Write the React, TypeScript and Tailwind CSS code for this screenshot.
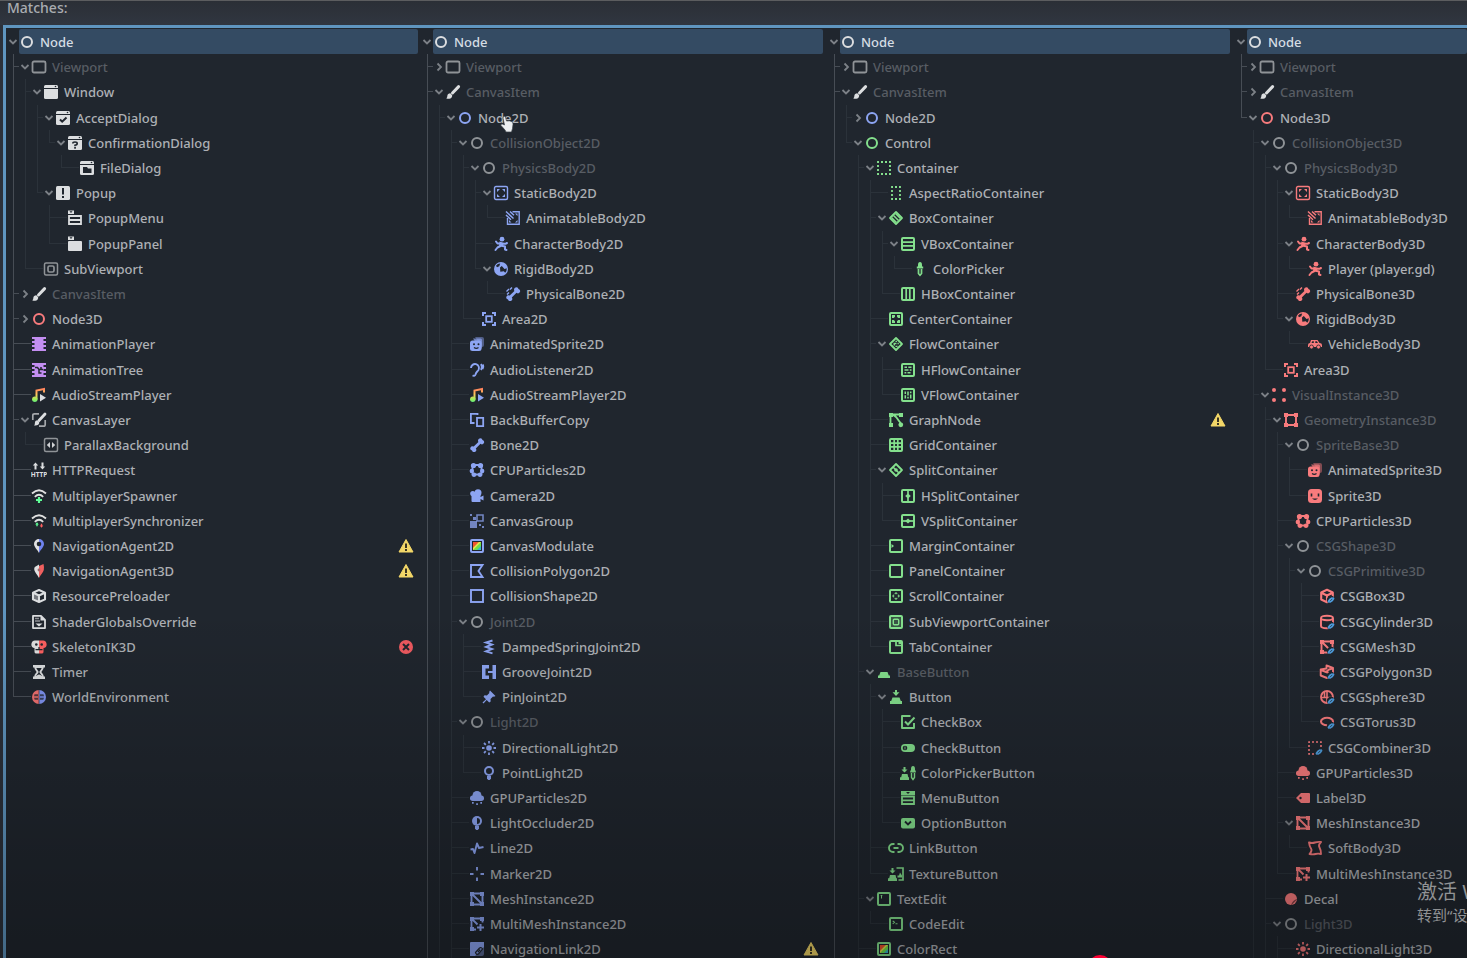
import { useState } from "react";
import type { ReactNode } from "react";

const INK = "#20262e";

const windowShape = (
  <>
    <path fill="currentColor" d="M1 4V2.5Q1 1 2.5 1h11Q15 1 15 2.5V4z" />
    <path fill="currentColor" d="M1 5h14v8.5q0 1.5-1.5 1.5h-11Q1 15 1 13.5z" />
    <circle cx="12.5" cy="2.5" r=".8" fill={INK} />
  </>
);

const brush = (
  <>
    <path stroke="currentColor" strokeWidth="3" strokeLinecap="round" d="M13.600 2.600 7.500 9" />
    <path fill="currentColor" d="M5.300 9.300l1.900 1.900c.2 2-1.200 3.300-3 3.500-1.100.1-2.200-.1-3-.5 1.100-.6 1-1.400 1.100-2.300.2-1.500 1.400-2.600 3-2.600z" />
  </>
);

const film = (
  <path
    fill="currentColor"
    fillRule="evenodd"
    d="M1 1h14v14H1zM1 3v2h2.500V3zM1 7v2h2.500V7zM1 11v2h2.500v-2zM12.500 3v2H15V3zM12.500 7v2H15V7zM12.500 11v2H15v-2z"
  />
);

const note = (
  <>
    <defs>
      <linearGradient id="noteFill" x1="0" y1="1" x2="0" y2="15" gradientUnits="userSpaceOnUse">
        <stop offset="0" stopColor="#ff7a5c" />
        <stop offset=".45" stopColor="#ffc65c" />
        <stop offset=".8" stopColor="#a0ee5c" />
        <stop offset="1" stopColor="#5fe87a" />
      </linearGradient>
    </defs>
    <path d="M5.500 12.500V3.500l7.500-1.500v3.500" fill="none" stroke="url(#noteFill)" strokeWidth="2" />
    <circle cx="3.800" cy="12.300" r="2.700" fill="url(#noteFill)" />
    <path d="M9 7l6 3.800-6 3.800z" fill="currentColor" />
  </>
);

const wifi = (
  <g fill="none" stroke="#e0e0e0" strokeWidth="1.800">
    <path d="M1 5.500q7-6.500 14 0" />
    <path d="M3.800 8.800q4.200-4 8.400 0" />
  </g>
);

const bone = (
  <path
    fill="currentColor"
    d="M10.500 1.500a2.200 2.200 0 0 1 3 1.500 2.200 2.200 0 0 1 1.300 3.300 2.300 2.300 0 0 1-3.300.5L6.800 11.500a2.300 2.300 0 0 1-.5 3.200 2.200 2.200 0 0 1-3.300-1.300 2.200 2.200 0 0 1-1.500-3 2.300 2.300 0 0 1 3.200-.8l4.700-4.700a2.300 2.300 0 0 1 1.100-3.400z"
  />
);

const face = (
  <>
    <circle cx="5" cy="8.300" r="1" fill={INK} />
    <circle cx="9.500" cy="8.300" r="1" fill={INK} />
    <path d="M5 11.500q2.300 1.800 4.500 0" fill="none" stroke={INK} strokeWidth="1.200" />
  </>
);

const frame = <rect x="2" y="2" width="12" height="12" rx="1" fill="none" stroke="currentColor" strokeWidth="2" />;
const diamond = <path d="M8 2l6 6-6 6-6-6z" fill="none" stroke="currentColor" strokeWidth="1.800" strokeLinejoin="round" />;
const bodyCorners = (
  <path fill="currentColor" d="M4 4h3L4 7zM12 4v3L9 4zM4 12V9l3 3zM12 12H9l3-3z" />
);
const cornerDots = (
  <path fill="currentColor" d="M1 1h4v4H1zM11 1h4v4h-4zM1 11h4v4H1z" />
);
const lastDot = <path fill="currentColor" d="M11 11h4v4h-4z" />;
const link = (
  <g>
    <circle cx="12" cy="12" r="4.200" fill={INK} />
    <path d="M9.800 13.500l1.300-1.900 1.700-1M14.200 10.500l-1.300 1.900-1.700 1" fill="none" stroke="#4f9fe0" strokeWidth="2.400" strokeLinecap="round" />
    <path d="M11 13.200l2.200-2.300" stroke={INK} strokeWidth=".7" />
  </g>
);
const pressed = <path fill="currentColor" d="M7 1h2v2.300h2.500L8 7 4.500 3.300H7zM4.500 8.500h7l1.300 3.500H14v3H2v-3h1.200z" />;
const smallPressed = <path fill="currentColor" d="M3.500 2h2v2.500h2l-3 3-3-3h2zM2 9h5.500l.8 3.300H9V15H0v-2.700h1.200z" />;
const rainbow = (
  <>
    <rect x="4" y="4" width="8" height="8" fill="#6fe04a" />
    <path d="M4 4h6L4 10z" fill="#f0552f" />
    <path d="M10 4h2L4 12v-2z" fill="#f3e04a" />
    <path d="M12 8v4H8z" fill="#35b7c9" />
  </>
);
const sun = (
  <>
    <circle cx="8" cy="8" r="2.800" fill="currentColor" />
    <path
      d="M8 1v2.500M8 12.500V15M1 8h2.500M12.500 8H15M3 3l1.800 1.800M11.200 11.200L13 13M13 3l-1.800 1.800M4.800 11.200L3 13"
      stroke="currentColor"
      strokeWidth="1.800"
    />
  </>
);
const bulbBase = <path fill="currentColor" d="M6 11h4v2.500L8.800 15H7.200L6 13.500z" />;

const ICONS: Record<string, ReactNode> = {
  ring: <circle cx="8" cy="8" r="5" fill="none" stroke="currentColor" strokeWidth="2" />,
  viewport: <rect x="1.500" y="2.500" width="13" height="11" rx="1.500" fill="none" stroke="currentColor" strokeWidth="1.800" />,
  brush,
  window: windowShape,
  accept: (
    <>
      {windowShape}
      <path d="M5 9.500l2.200 2.200L11.500 7.500" fill="none" stroke={INK} strokeWidth="2" />
    </>
  ),
  confirm: (
    <>
      {windowShape}
      <path d="M5.800 8.500q0-1.500 2.200-1.500t2.200 1.500q0 1.500-2.200 1.700v1" fill="none" stroke={INK} strokeWidth="1.600" />
      <rect x="7.200" y="12" width="1.700" height="1.700" fill={INK} />
    </>
  ),
  file: (
    <>
      {windowShape}
      <path d="M4 7h4l1 1.500h3.500V13H4z" fill={INK} />
    </>
  ),
  popup: (
    <>
      <rect x="1" y="1" width="14" height="14" rx="1.500" fill="currentColor" />
      <path d="M7 3h2v6.500H7zM7 11h2v2H7z" fill={INK} />
    </>
  ),
  popupMenu: (
    <>
      <path d="M1 .5h6V4H1z" fill="currentColor" />
      <path d="M2.500 1.300h3L4 3z" fill={INK} />
      <path d="M2 6h12v8H2zM2 10h12" fill="none" stroke="currentColor" strokeWidth="1.800" />
    </>
  ),
  popupPanel: (
    <>
      <path d="M1 .5h6V4H1z" fill="currentColor" />
      <path d="M2.500 1.300h3L4 3z" fill={INK} />
      <rect x="1" y="5" width="14" height="10" rx="1" fill="currentColor" />
    </>
  ),
  subViewport: (
    <>
      <rect x="1.500" y="2" width="13" height="12" rx="1.500" fill="none" stroke="currentColor" strokeWidth="1.500" />
      <rect x="5" y="5" width="6" height="6" rx="1.500" fill="none" stroke="currentColor" strokeWidth="1.700" />
    </>
  ),
  film,
  filmTree: (
    <>
      {film}
      <path d="M4 5.500h2.500l1.500 2h4M8 7.500v3.500h2.500M10 5v2" fill="none" stroke={INK} strokeWidth="1.500" />
    </>
  ),
  note,
  canvasLayer: (
    <>
      <path d="M8 1.800H3.500Q1.800 1.800 1.800 3.500V8M14.200 8v4.500q0 1.700-1.700 1.700H8" fill="none" stroke="#a4a7ab" strokeWidth="1.700" />
      <path d="M14 2L8 8.500" stroke="currentColor" strokeWidth="2.800" strokeLinecap="round" />
      <path d="M6.300 8.300l2 2c0 2.500-2.300 3.700-5.300 3.200 1.300-1 .6-2 1-3.300.3-1.200 1.200-1.900 2.300-1.900z" fill="currentColor" />
    </>
  ),
  parallax: (
    <>
      <rect x="1.500" y="1.500" width="13" height="13" rx="1.500" fill="none" stroke="currentColor" strokeWidth="1.500" />
      <path d="M7 5v6L3.800 8zM9 5v6l3.200-3z" fill="#d0d2d5" />
    </>
  ),
  http: (
    <>
      <path d="M3.500 7.500v-4H1.800L4.500.5l2.700 3H5.500v4zM10.500.5v4H8.800l2.700 3 2.700-3h-1.700v-4z" fill="currentColor" />
      <text x="8" y="15" textAnchor="middle" fontSize="6.500" fontWeight="700" fill="currentColor" fontFamily="Noto Sans, sans-serif">
        HTTP
      </text>
    </>
  ),
  spawner: (
    <>
      {wifi}
      <path d="M8 9v6M5 12h6" stroke="#5fff97" strokeWidth="2.200" />
    </>
  ),
  synchronizer: (
    <>
      {wifi}
      <path d="M4.200 11.500L6 9.200l1.800 2.300H6.700v1.800H5.300v-1.800z" fill="#5fff97" />
      <path d="M8.700 12.500l1.800 2.300 1.800-2.300h-1.100v-1.800H9.800v1.800z" fill="#ff5f5f" />
    </>
  ),
  agent2d: (
    <>
      <path d="M8 1a5 5 0 0 0-5 5c0 3 3 5 5 9z" fill="#e0e0e0" />
      <path d="M8 1a5 5 0 0 1 5 5c0 3-3 5-5 9z" fill="#6f83f0" />
      <circle cx="8" cy="6" r="2.300" fill={INK} />
    </>
  ),
  agent3d: (
    <>
      <path d="M8 1.500L3.800 4Q3 5 3.300 7c.5 2.500 3.200 4.500 4.700 8z" fill="#e0e0e0" />
      <path d="M8 3l4.500-2q.8 3 .3 6c-.5 2.500-3.300 4.500-4.800 8z" fill="#f0605f" />
      <circle cx="8" cy="7" r="1.400" fill="#a5686c" />
    </>
  ),
  box: (
    <>
      <path d="M8 2l6 2.600v6.800L8 14l-6-2.600V4.600zM2.200 4.800L8 7.500l5.800-2.700M8 7.500V14" fill="none" stroke="currentColor" strokeWidth="2.100" strokeLinejoin="round" />
      <path d="M2 5l6 2.800V14l-6-2.700z" fill="currentColor" fillOpacity=".45" />
    </>
  ),
  shaderGlobals: (
    <>
      <path d="M2 1.900h8l4 4v8.200H2z" fill="none" stroke="currentColor" strokeWidth="1.800" strokeLinejoin="round" />
      <path d="M4 4.500h4M4 7h5" stroke="#8e9196" strokeWidth="1.600" />
      <path d="M9.500 1.500v5h5M4.500 9.500h7l-3.500 3z" fill="currentColor" />
    </>
  ),
  skull: (
    <>
      <path d="M8 1.500H5A3.800 3.800 0 0 0 3.500 9v4.300Q4 14.500 5 14.500h3z" fill="#e0e0e0" />
      <path d="M8 1.500h3A3.800 3.800 0 0 1 12.500 9v4.300q-.5 1.200-1.500 1.200H8z" fill="#fc6060" />
      <circle cx="5.300" cy="5.500" r="1.300" fill={INK} />
      <circle cx="10.700" cy="5.500" r="1.300" fill={INK} />
      <path d="M4.500 10.700h7M8 8v2" stroke={INK} strokeWidth="1.200" />
    </>
  ),
  timer: (
    <>
      <path d="M2 1h12v2.500H2zM2 12.500h12V15H2z" fill="currentColor" />
      <path d="M4.200 3c0 3 2.500 4 2.500 5s-2.500 2-2.500 5h7.600c0-3-2.500-4-2.500-5s2.500-2 2.500-5z" fill="none" stroke="currentColor" strokeWidth="1.900" />
      <path d="M5 12.500Q8 8.500 11 12.500z" fill="currentColor" />
    </>
  ),
  world: (
    <>
      <path d="M8 1a7 7 0 0 0 0 14z" fill="#f07070" />
      <path d="M8 1a7 7 0 0 1 0 14z" fill="#7e92f0" />
      <path d="M3.500 5.300h3.500v2H3zM3 8.700h4v2H3.700zM9 5.300h3.500l.5 2H9zM9 8.700h4l-.7 2H9z" fill={INK} fillOpacity=".75" />
      <path d="M8 1v14" stroke={INK} strokeWidth=".6" />
    </>
  ),
  staticBody: (
    <>
      <rect x="1.500" y="1.500" width="13" height="13" rx="1.500" fill="none" stroke="currentColor" strokeWidth="1.400" />
      {bodyCorners}
    </>
  ),
  animBody: (
    <>
      <path d="M7.500 1.800h6.700v12.400H2.500V8" fill="none" stroke="currentColor" strokeWidth="1.400" />
      <path d="M1 1.500l7.500 7M1 5l5 4.700M5 1.500l4 3.700" stroke="currentColor" strokeWidth="1.500" />
      <path fill="currentColor" d="M12.500 3.500v2.500L10 3.500zM4 12.500V10l2.500 2.500zM12.500 12.500H10l2.500-2.500z" />
    </>
  ),
  character: (
    <>
      <circle cx="9" cy="3.200" r="2.400" fill="currentColor" />
      <path d="M6.500 5.500L11 7l-1.500 3L6 11z" fill="currentColor" />
      <path d="M3 5.500l1.500 2H8M7.500 10L4.500 11.500 2.500 14M8.500 9.800l3.500.7v3l1.500.5M9.500 7.800h3L14 7" fill="none" stroke="currentColor" strokeWidth="2" strokeLinejoin="round" strokeLinecap="round" />
    </>
  ),
  rigid: (
    <>
      <circle cx="8" cy="8" r="7" fill="currentColor" />
      <path d="M3 4.800Q4.500 2.600 7.200 2.500L6.300 5.200 4 6.300z" fill={INK} />
      <path d="M7 6.500l1.800-1.500 2.700 3 2.300-.7q.2 2.500-1.600 4.500l-1.400-1.600-3.500.5z" fill={INK} />
    </>
  ),
  bone,
  physBone: (
    <>
      {bone}
      <path d="M1.500 5.500l2.500-2.500M2 8.500l2-2M5 3.500l2-2" stroke="currentColor" strokeWidth="1.400" />
    </>
  ),
  area: (
    <>
      <path d="M5 2H2v3M11 2h3v3M5 14H2v-3M11 14h3v-3" fill="none" stroke="currentColor" strokeWidth="2" />
      <rect x="5.200" y="5.200" width="5.600" height="5.600" fill="none" stroke="currentColor" strokeWidth="1.800" />
    </>
  ),
  animSprite: (
    <>
      <path d="M6 1h7q2 0 2 2v6q0 2-2 2z" fill="currentColor" fillOpacity=".45" />
      <path d="M4 2.500h7.500q1.500 0 1.500 1.500v7q0 2-2 2z" fill="currentColor" fillOpacity=".7" />
      <rect x="1" y="4.500" width="11.500" height="10.500" rx="2.500" fill="currentColor" />
      {face}
    </>
  ),
  sprite: (
    <>
      <rect x="1" y="1" width="14" height="14" rx="3.500" fill="currentColor" />
      <path d="M4.500 5.500v3M11.500 5.500v3" stroke={INK} strokeWidth="1.600" />
      <path d="M5 10.500q3 2.800 6 0z" fill={INK} />
    </>
  ),
  ear: (
    <path d="M2 6a4 4 0 1 1 7.500 2C8 10 7 10 6.500 12.500 6 14 4.500 14 3.500 13.500M12 2q1.800 3 0 6M14 2.500q.8 2.500-.5 4.500" fill="none" stroke="currentColor" strokeWidth="1.900" />
  ),
  backBuffer: (
    <path d="M5.500 11H1.900V1.900h6.600V3M8 5.900h6.200v8.200H8z" fill="none" stroke="currentColor" strokeWidth="1.800" />
  ),
  cpuParticles: (
    <>
      <path d="M3.500 3h9v9.500h-9z" fill="none" stroke="currentColor" strokeWidth="1.800" />
      <g fill="currentColor">
        <circle cx="4.500" cy="3.500" r="2.600" />
        <circle cx="11.500" cy="3.500" r="2.600" />
        <circle cx="5" cy="12.800" r="2.200" />
        <circle cx="11" cy="12.800" r="2.200" />
        <circle cx="2.800" cy="9" r="2.200" />
        <circle cx="13.200" cy="9" r="2.200" />
      </g>
    </>
  ),
  camera: (
    <>
      <circle cx="9" cy="4.800" r="3.500" fill="currentColor" />
      <circle cx="3.800" cy="5.500" r="2.600" fill="currentColor" />
      <path d="M2.500 7h9v2l3-1.500v5L11.500 11v3h-8q-1 0-1-1z" fill="currentColor" />
    </>
  ),
  canvasGroup: (
    <>
      <path d="M1 8h7v7H1z" fill="currentColor" fillOpacity=".75" />
      <path d="M8 2h6v6H8z" fill="none" stroke="currentColor" strokeWidth="1.600" strokeOpacity=".75" />
      <path d="M1 1h2v2H1zM13 13h2v2h-2zM4 4h3v3H4zM10 11h2v2h-2z" fill="currentColor" fillOpacity=".75" />
    </>
  ),
  modulate: (
    <>
      {frame}
      {rainbow}
    </>
  ),
  polygon: <path d="M2 2h11.500L9.500 8l4 6H2z" fill="none" stroke="currentColor" strokeWidth="1.900" />,
  square: <rect x="2" y="2" width="12" height="12" fill="none" stroke="currentColor" strokeWidth="1.900" />,
  spring: <path d="M11.500 1.500L5 3.500l6 2L5 8l6 2-6 2.300 6.500 2" fill="none" stroke="currentColor" strokeWidth="1.900" />,
  groove: (
    <>
      <path d="M1 1h7v3.500H4.500v7H8V15H1zM11.500 1H15v14h-3.500z" fill="currentColor" />
      <path d="M7 8h5" stroke="currentColor" strokeWidth="2" />
    </>
  ),
  pin: (
    <path d="M9 1.500l5.500 5.500-1.500.8-1-.2-2.500 2.500.2 2.400-1.500 1L5.700 11 2.500 14.500 1.500 13.500 5 10.300 2.500 7.800l1-1.500 2.400.2L8.400 4l-.2-1z" fill="currentColor" />
  ),
  sun,
  bulb: (
    <>
      <circle cx="8" cy="6" r="4" fill="none" stroke="currentColor" strokeWidth="2" />
      {bulbBase}
    </>
  ),
  occluder: (
    <>
      <circle cx="8" cy="6" r="5" fill="currentColor" />
      <path d="M8 3a3 3 0 0 1 0 6z" fill={INK} />
      {bulbBase}
    </>
  ),
  gpuParticles: (
    <>
      <circle cx="8" cy="5.500" r="4.500" fill="currentColor" />
      <rect x="1" y="5.500" width="14" height="5.500" rx="2.700" fill="currentColor" />
      <path d="M3 12h1.700v1.700H3zM7.200 13.300h1.700V15H7.200zM11.300 12H13v1.700h-1.700z" fill="currentColor" />
    </>
  ),
  line: <path d="M1.500 9.500L4 9l1.500 4L8 3.500 10 8l4.500-1" fill="none" stroke="currentColor" strokeWidth="1.900" strokeLinejoin="round" />,
  marker: <path d="M8 1v3.500M8 11.500V15M1 8h3.500M11.500 8H15" stroke="currentColor" strokeWidth="1.900" />,
  mesh: (
    <>
      <path d="M2.500 2.500h11v11h-11zL13.500 13.500" fill="none" stroke="currentColor" strokeWidth="1.900" />
      {cornerDots}
      {lastDot}
    </>
  ),
  multiMesh: (
    <>
      <path d="M2.500 13.500v-11h11M2.500 2.500l6 6M4 13.500h3M13.500 3.500v3" fill="none" stroke="currentColor" strokeWidth="1.800" />
      {cornerDots}
      <path d="M11.500 8v7M8 11.500h7" stroke="currentColor" strokeWidth="2" />
    </>
  ),
  navLink: (
    <>
      <path d="M1 2q0-1 1-1h13v5L6 15H1z" fill="currentColor" />
      <path d="M15 4v9q0 2-2 2H4z" fill="currentColor" fillOpacity=".5" />
      <path d="M6.500 11.500l4-4.500q2-1 3 1L9.500 13q-2.500 1-3-1.500z" fill="none" stroke={INK} strokeWidth="1.200" />
      <path d="M8.800 11.200l2.400-2.700" stroke={INK} strokeWidth="1.200" />
    </>
  ),
  container: <rect x="2" y="2" width="12" height="12" fill="none" stroke="currentColor" strokeWidth="1.900" strokeDasharray="2 2" strokeDashoffset="1" />,
  aspect: <path d="M4 2h8v12H4z" fill="none" stroke="currentColor" strokeWidth="1.800" strokeDasharray="2 2" strokeDashoffset="1" />,
  boxContainer: (
    <>
      {diamond}
      <path d="M7.500 3.500l5 5M5.500 5.500l5 5M3.500 7.500l5 5" stroke="currentColor" strokeWidth="1.500" />
    </>
  ),
  vbox: (
    <>
      {frame}
      <path d="M3 6.200h10M3 9.800h10" stroke="currentColor" strokeWidth="1.700" />
    </>
  ),
  hbox: (
    <>
      {frame}
      <path d="M6.200 3v10M9.800 3v10" stroke="currentColor" strokeWidth="1.700" />
    </>
  ),
  picker: (
    <>
      <path d="M6 4q0-3 2-3t2 3v1.500h1.200v2H4.800v-2H6z" fill="currentColor" />
      <path d="M6.300 8v4.500L8 14.500l1.700-2V8" fill="currentColor" fillOpacity=".35" stroke="currentColor" strokeWidth="1.300" />
    </>
  ),
  center: (
    <>
      {frame}
      <path d="M4 4h3v1.800l-1.200 1.200H4zM12 4v3h-1.800L9 5.800V4zM4 12V9h1.800L7 10.200V12zM12 12H9v-1.800L10.200 9H12z" fill="currentColor" />
    </>
  ),
  flow: (
    <>
      {diamond}
      <path d="M5.500 7.500h3M7.500 10.300h2M9.500 7.500h1.300M7.500 5.300h1.500M5.500 8.800h1.500" stroke="currentColor" strokeWidth="1.300" />
    </>
  ),
  hflow: (
    <>
      {frame}
      <path d="M4.500 5.300h2.500M8.300 5.300h3.200M4.500 8h4M9.800 8h1.700M4.500 10.700h1.800M7.500 10.700h3" stroke="currentColor" strokeWidth="1.500" />
    </>
  ),
  vflow: (
    <>
      {frame}
      <path d="M5.300 4.500V7M5.300 8.300v3.200M8 4.500v4M8 9.800v1.700M10.700 4.500v1.800M10.700 7.500v4" stroke="currentColor" strokeWidth="1.500" />
    </>
  ),
  graph: (
    <>
      <path d="M2.500 13.500v-11h11M2.500 2.500q4 0 6 3t4.500 6" fill="none" stroke="currentColor" strokeWidth="1.800" />
      {cornerDots}
      <circle cx="12.800" cy="12.800" r="2.400" fill="currentColor" />
    </>
  ),
  grid: (
    <>
      {frame}
      <path d="M6.200 2v12M9.800 2v12M2 6.200h12M2 9.800h12" stroke="currentColor" strokeWidth="1.700" />
    </>
  ),
  split: (
    <>
      {diamond}
      <path d="M5 5l6 6" stroke="currentColor" strokeWidth="1.500" />
      <circle cx="8" cy="8" r="1.800" fill="currentColor" />
    </>
  ),
  hsplit: (
    <>
      {frame}
      <path d="M8 2v12" stroke="currentColor" strokeWidth="1.700" />
      <path d="M8 5.500L10.800 8 8 10.500 5.200 8z" fill="currentColor" />
    </>
  ),
  vsplit: (
    <>
      {frame}
      <path d="M2 8h12" stroke="currentColor" strokeWidth="1.700" />
      <path d="M8 5.500L10.800 8 8 10.500 5.200 8z" fill="currentColor" />
    </>
  ),
  margin: (
    <>
      {frame}
      <path d="M3.500 6l2.500 2-2.500 2z" fill="currentColor" />
    </>
  ),
  panel: frame,
  scroll: (
    <>
      {frame}
      <path d="M8 4.300l1.300 1.500H6.700zM8 11.700l1.300-1.500H6.700zM4.300 8l1.500-1.300v2.600zM11.700 8l-1.500-1.300v2.600z" fill="currentColor" stroke="currentColor" strokeWidth=".5" />
    </>
  ),
  subViewportContainer: (
    <>
      {frame}
      <rect x="5.300" y="5.300" width="5.400" height="5.400" rx="1" fill="none" stroke="currentColor" strokeWidth="1.400" />
      <path d="M3 3h10v10H3z" fill="currentColor" fillOpacity=".25" />
    </>
  ),
  tab: (
    <>
      {frame}
      <path d="M8 2v4.500h6" fill="none" stroke="currentColor" strokeWidth="1.700" />
      <path d="M10.500 3h3v2h-3z" fill="currentColor" />
    </>
  ),
  baseButton: <path fill="currentColor" d="M4.500 8h7l1.300 3.500H14V14H2v-2.500h1.200z" />,
  button: pressed,
  checkBox: (
    <>
      <path d="M10.500 2H2v12h12V9" fill="none" stroke="currentColor" strokeWidth="1.900" strokeLinejoin="round" />
      <path d="M5 7.500l3 3 6.500-7" fill="none" stroke="currentColor" strokeWidth="2" />
    </>
  ),
  checkButton: (
    <>
      <rect x="1" y="4" width="14" height="8" rx="4" fill="currentColor" />
      <circle cx="5" cy="8" r="2.300" fill={INK} />
      <path d="M5 6.500v3" stroke="currentColor" strokeWidth=".8" />
    </>
  ),
  pickerButton: (
    <>
      {smallPressed}
      <path d="M11 4q0-3 2-3t2 3v1.500h.8V7.500h-5.600v-2h.8z" fill="currentColor" />
      <path d="M11.500 8v4.500l1.500 2 1.500-2V8" fill="none" stroke="currentColor" strokeWidth="1.400" />
    </>
  ),
  menuButton: (
    <>
      <path d="M1 1h14v4H1z" fill="currentColor" />
      <path d="M6 2h4L8 4z" fill={INK} />
      <path d="M2 6.500h12V14H2zM2 10.300h12" fill="none" stroke="currentColor" strokeWidth="1.800" />
    </>
  ),
  optionButton: (
    <>
      <rect x="1" y="3" width="14" height="10.500" rx="2" fill="currentColor" />
      <path d="M5 6.500L8 9.500l3-3" fill="none" stroke={INK} strokeWidth="1.900" />
    </>
  ),
  linkButton: (
    <path d="M6.500 4H5a3.800 3.800 0 0 0 0 8h1.500M9.500 4H11a3.800 3.800 0 0 1 0 8H9.500M5.500 8h5" fill="none" stroke="currentColor" strokeWidth="1.900" />
  ),
  textureButton: (
    <>
      {smallPressed}
      <path d="M8.500 2H15v12H10.500" fill="none" stroke="currentColor" strokeWidth="1.700" />
      <path d="M9.500 9.500h1.500l1-3 2 3v2h-4.500z" fill="currentColor" />
    </>
  ),
  textEdit: (
    <>
      {frame}
      <path d="M5.500 4.500v3M4.700 4.500h1.600" stroke="currentColor" />
    </>
  ),
  codeEdit: (
    <>
      {frame}
      <path d="M4.700 4.800l1.800 1.500-1.800 1.500M7.500 7.800h2" fill="none" stroke="currentColor" strokeWidth="1.100" />
    </>
  ),
  vehicle: (
    <>
      <path d="M4 4h6.500l2 3q2.500 0 2.500 2v2H1V9q0-2 2-2z" fill="currentColor" />
      <path d="M5.300 5.300h1.500V7H4.500zM8.300 5.300h1.500L11 7H8.300z" fill={INK} />
      <circle cx="4.500" cy="11" r="2" fill="currentColor" stroke={INK} strokeWidth=".8" />
      <circle cx="11.500" cy="11" r="2" fill="currentColor" stroke={INK} strokeWidth=".8" />
    </>
  ),
  visual: (
    <g fill="currentColor">
      <circle cx="3" cy="3" r="2" />
      <circle cx="13" cy="3" r="2" />
      <circle cx="3" cy="13" r="2" />
      <circle cx="13" cy="13" r="2" />
    </g>
  ),
  geometry: (
    <>
      <path d="M3 3h10v10H3z" fill="none" stroke="currentColor" strokeWidth="1.900" />
      {cornerDots}
      {lastDot}
    </>
  ),
  csgBox: (
    <>
      <path d="M8 1.800l5.800 2.700v7L8 14.200l-5.800-2.700v-7zM2.200 4.700L8 7.500l5.800-2.800M8 7.500V14" fill="none" stroke="currentColor" strokeWidth="2.100" strokeLinejoin="round" />
      {link}
    </>
  ),
  csgCylinder: (
    <>
      <path d="M2 4v8q0 2.200 6 2.200T14 12V4M2 4q0-2.200 6-2.200T14 4 8 6.200 2 4z" fill="none" stroke="currentColor" strokeWidth="1.900" />
      {link}
    </>
  ),
  csgMesh: (
    <>
      <path d="M2.500 2.500h11v11h-11zL13.500 13.500" fill="none" stroke="currentColor" strokeWidth="1.900" />
      {cornerDots}
      {link}
    </>
  ),
  csgPolygon: (
    <>
      <path d="M7.500 4.500V1.500L14 4v4.500L8 14l-6.300-2.500V5.500zM2 6l5 2 3-2.500 3.500-1M7 8l3 1" fill="none" stroke="currentColor" strokeWidth="1.900" strokeLinejoin="round" />
      {link}
    </>
  ),
  csgSphere: (
    <>
      <circle cx="8" cy="8" r="6" fill="none" stroke="currentColor" strokeWidth="1.900" />
      <path d="M2 8.500h12M8 2v12M5.500 8V3" fill="none" stroke="currentColor" strokeWidth="1.600" />
      {link}
    </>
  ),
  csgTorus: (
    <>
      <ellipse cx="8" cy="7.500" rx="6" ry="3.700" fill="none" stroke="currentColor" strokeWidth="2.100" />
      {link}
    </>
  ),
  csgCombiner: (
    <>
      <rect x="2" y="2" width="12" height="12" fill="none" stroke="currentColor" strokeWidth="1.600" strokeDasharray="2 2" strokeDashoffset="1" />
      {link}
    </>
  ),
  label: (
    <>
      <path d="M6 3h8q1 0 1 1v8q0 1-1 1H6L1 8z" fill="currentColor" />
      <circle cx="5.500" cy="8" r="1.200" fill={INK} />
    </>
  ),
  softBody: (
    <path d="M2 2.500q3 1 6 0t6-.5q-3 3-1.500 5.500t1.500 6.500q-3-.8-5.500 0t-6 0q3-3.500 1.500-5.500T2 2.500z" fill="none" stroke="currentColor" strokeWidth="1.900" strokeLinejoin="round" />
  ),
  decal: (
    <>
      <circle cx="8" cy="8" r="6" fill="currentColor" />
      <path d="M14 8v.5L8.500 14H8q1-2.500 2.500-4T14 8z" fill="#7c3a40" />
    </>
  ),
};

type Tint = "w" | "n" | "b" | "r" | "g" | "p";
const TINTS: Record<Tint, string> = {
  w: "text-[#dcdee0]",
  n: "text-[#8f9397]",
  b: "text-[#8da5f3]",
  r: "text-[#f87b7d]",
  g: "text-[#84e08d]",
  p: "text-[#c38ef1]",
};

type Fold = "open" | "closed" | "leaf";
type Flag = "dim" | "warning" | "error";
type Row = [depth: number, fold: Fold, icon: string, tint: Tint, label: string, flag?: Flag];

const NODES: Row[] = [
  [0, "open", "ring", "w", "Node"],
  [1, "open", "viewport", "n", "Viewport", "dim"],
  [2, "open", "window", "w", "Window"],
  [3, "open", "accept", "w", "AcceptDialog"],
  [4, "open", "confirm", "w", "ConfirmationDialog"],
  [5, "leaf", "file", "w", "FileDialog"],
  [3, "open", "popup", "w", "Popup"],
  [4, "leaf", "popupMenu", "w", "PopupMenu"],
  [4, "leaf", "popupPanel", "w", "PopupPanel"],
  [2, "leaf", "subViewport", "n", "SubViewport"],
  [1, "closed", "brush", "w", "CanvasItem", "dim"],
  [1, "closed", "ring", "r", "Node3D"],
  [1, "leaf", "film", "p", "AnimationPlayer"],
  [1, "leaf", "filmTree", "p", "AnimationTree"],
  [1, "leaf", "note", "w", "AudioStreamPlayer"],
  [1, "open", "canvasLayer", "w", "CanvasLayer"],
  [2, "leaf", "parallax", "n", "ParallaxBackground"],
  [1, "leaf", "http", "w", "HTTPRequest"],
  [1, "leaf", "spawner", "w", "MultiplayerSpawner"],
  [1, "leaf", "synchronizer", "w", "MultiplayerSynchronizer"],
  [1, "leaf", "agent2d", "w", "NavigationAgent2D", "warning"],
  [1, "leaf", "agent3d", "w", "NavigationAgent3D", "warning"],
  [1, "leaf", "box", "w", "ResourcePreloader"],
  [1, "leaf", "shaderGlobals", "w", "ShaderGlobalsOverride"],
  [1, "leaf", "skull", "w", "SkeletonIK3D", "error"],
  [1, "leaf", "timer", "w", "Timer"],
  [1, "leaf", "world", "w", "WorldEnvironment"],
];

const NODES_2D: Row[] = [
  [0, "open", "ring", "w", "Node"],
  [1, "closed", "viewport", "n", "Viewport", "dim"],
  [1, "open", "brush", "w", "CanvasItem", "dim"],
  [2, "open", "ring", "b", "Node2D"],
  [3, "open", "ring", "n", "CollisionObject2D", "dim"],
  [4, "open", "ring", "n", "PhysicsBody2D", "dim"],
  [5, "open", "staticBody", "b", "StaticBody2D"],
  [6, "leaf", "animBody", "b", "AnimatableBody2D"],
  [5, "leaf", "character", "b", "CharacterBody2D"],
  [5, "open", "rigid", "b", "RigidBody2D"],
  [6, "leaf", "physBone", "b", "PhysicalBone2D"],
  [4, "leaf", "area", "b", "Area2D"],
  [3, "leaf", "animSprite", "b", "AnimatedSprite2D"],
  [3, "leaf", "ear", "b", "AudioListener2D"],
  [3, "leaf", "note", "b", "AudioStreamPlayer2D"],
  [3, "leaf", "backBuffer", "b", "BackBufferCopy"],
  [3, "leaf", "bone", "b", "Bone2D"],
  [3, "leaf", "cpuParticles", "b", "CPUParticles2D"],
  [3, "leaf", "camera", "b", "Camera2D"],
  [3, "leaf", "canvasGroup", "b", "CanvasGroup"],
  [3, "leaf", "modulate", "b", "CanvasModulate"],
  [3, "leaf", "polygon", "b", "CollisionPolygon2D"],
  [3, "leaf", "square", "b", "CollisionShape2D"],
  [3, "open", "ring", "n", "Joint2D", "dim"],
  [4, "leaf", "spring", "b", "DampedSpringJoint2D"],
  [4, "leaf", "groove", "b", "GrooveJoint2D"],
  [4, "leaf", "pin", "b", "PinJoint2D"],
  [3, "open", "ring", "n", "Light2D", "dim"],
  [4, "leaf", "sun", "b", "DirectionalLight2D"],
  [4, "leaf", "bulb", "b", "PointLight2D"],
  [3, "leaf", "gpuParticles", "b", "GPUParticles2D"],
  [3, "leaf", "occluder", "b", "LightOccluder2D"],
  [3, "leaf", "line", "b", "Line2D"],
  [3, "leaf", "marker", "b", "Marker2D"],
  [3, "leaf", "mesh", "b", "MeshInstance2D"],
  [3, "leaf", "multiMesh", "b", "MultiMeshInstance2D"],
  [3, "leaf", "navLink", "b", "NavigationLink2D", "warning"],
];

const CONTROLS: Row[] = [
  [0, "open", "ring", "w", "Node"],
  [1, "closed", "viewport", "n", "Viewport", "dim"],
  [1, "open", "brush", "w", "CanvasItem", "dim"],
  [2, "closed", "ring", "b", "Node2D"],
  [2, "open", "ring", "g", "Control"],
  [3, "open", "container", "g", "Container"],
  [4, "leaf", "aspect", "g", "AspectRatioContainer"],
  [4, "open", "boxContainer", "g", "BoxContainer"],
  [5, "open", "vbox", "g", "VBoxContainer"],
  [6, "leaf", "picker", "g", "ColorPicker"],
  [5, "leaf", "hbox", "g", "HBoxContainer"],
  [4, "leaf", "center", "g", "CenterContainer"],
  [4, "open", "flow", "g", "FlowContainer"],
  [5, "leaf", "hflow", "g", "HFlowContainer"],
  [5, "leaf", "vflow", "g", "VFlowContainer"],
  [4, "leaf", "graph", "g", "GraphNode", "warning"],
  [4, "leaf", "grid", "g", "GridContainer"],
  [4, "open", "split", "g", "SplitContainer"],
  [5, "leaf", "hsplit", "g", "HSplitContainer"],
  [5, "leaf", "vsplit", "g", "VSplitContainer"],
  [4, "leaf", "margin", "g", "MarginContainer"],
  [4, "leaf", "panel", "g", "PanelContainer"],
  [4, "leaf", "scroll", "g", "ScrollContainer"],
  [4, "leaf", "subViewportContainer", "g", "SubViewportContainer"],
  [4, "leaf", "tab", "g", "TabContainer"],
  [3, "open", "baseButton", "g", "BaseButton", "dim"],
  [4, "open", "button", "g", "Button"],
  [5, "leaf", "checkBox", "g", "CheckBox"],
  [5, "leaf", "checkButton", "g", "CheckButton"],
  [5, "leaf", "pickerButton", "g", "ColorPickerButton"],
  [5, "leaf", "menuButton", "g", "MenuButton"],
  [5, "leaf", "optionButton", "g", "OptionButton"],
  [4, "leaf", "linkButton", "g", "LinkButton"],
  [4, "leaf", "textureButton", "g", "TextureButton"],
  [3, "open", "textEdit", "g", "TextEdit"],
  [4, "leaf", "codeEdit", "g", "CodeEdit"],
  [3, "leaf", "modulate", "g", "ColorRect"],
];

const NODES_3D: Row[] = [
  [0, "open", "ring", "w", "Node"],
  [1, "closed", "viewport", "n", "Viewport", "dim"],
  [1, "closed", "brush", "w", "CanvasItem", "dim"],
  [1, "open", "ring", "r", "Node3D"],
  [2, "open", "ring", "n", "CollisionObject3D", "dim"],
  [3, "open", "ring", "n", "PhysicsBody3D", "dim"],
  [4, "open", "staticBody", "r", "StaticBody3D"],
  [5, "leaf", "animBody", "r", "AnimatableBody3D"],
  [4, "open", "character", "r", "CharacterBody3D"],
  [5, "leaf", "character", "r", "Player (player.gd)"],
  [4, "leaf", "physBone", "r", "PhysicalBone3D"],
  [4, "open", "rigid", "r", "RigidBody3D"],
  [5, "leaf", "vehicle", "r", "VehicleBody3D"],
  [3, "leaf", "area", "r", "Area3D"],
  [2, "open", "visual", "r", "VisualInstance3D", "dim"],
  [3, "open", "geometry", "r", "GeometryInstance3D", "dim"],
  [4, "open", "ring", "n", "SpriteBase3D", "dim"],
  [5, "leaf", "animSprite", "r", "AnimatedSprite3D"],
  [5, "leaf", "sprite", "r", "Sprite3D"],
  [4, "leaf", "cpuParticles", "r", "CPUParticles3D"],
  [4, "open", "ring", "n", "CSGShape3D", "dim"],
  [5, "open", "ring", "n", "CSGPrimitive3D", "dim"],
  [6, "leaf", "csgBox", "r", "CSGBox3D"],
  [6, "leaf", "csgCylinder", "r", "CSGCylinder3D"],
  [6, "leaf", "csgMesh", "r", "CSGMesh3D"],
  [6, "leaf", "csgPolygon", "r", "CSGPolygon3D"],
  [6, "leaf", "csgSphere", "r", "CSGSphere3D"],
  [6, "leaf", "csgTorus", "r", "CSGTorus3D"],
  [5, "leaf", "csgCombiner", "r", "CSGCombiner3D"],
  [4, "leaf", "gpuParticles", "r", "GPUParticles3D"],
  [4, "leaf", "label", "r", "Label3D"],
  [4, "open", "mesh", "r", "MeshInstance3D"],
  [5, "leaf", "softBody", "r", "SoftBody3D"],
  [4, "leaf", "multiMesh", "r", "MultiMeshInstance3D"],
  [3, "leaf", "decal", "r", "Decal"],
  [3, "open", "ring", "n", "Light3D", "dim"],
  [4, "leaf", "sun", "r", "DirectionalLight3D"],
];

function StatusIcon({ flag }: { flag: Flag }) {
  if (flag === "warning") {
    return (
      <svg viewBox="0 0 16 16" className="mr-1 size-4 shrink-0" role="img" aria-label="Warning">
        <path d="M8 1.500L15 14H1z" fill="#f3d768" stroke="#f3d768" strokeLinejoin="round" />
        <path d="M7 5.500h2V10H7zM7 11h2v2H7z" fill="#3a3523" />
      </svg>
    );
  }
  return (
    <svg viewBox="0 0 16 16" className="mr-1 size-4 shrink-0" role="img" aria-label="Error">
      <circle cx="8" cy="8" r="7" fill="#ef5a60" />
      <path d="M5 5l6 6M11 5l-6 6" stroke={INK} strokeWidth="2" />
    </svg>
  );
}

/** One 12px indent cell: a vertical guide, with a branch to the right when `branch` is set. */
function Guide({ root, upper, lower, branch }: { root: boolean; upper: boolean; lower: boolean; branch: boolean }) {
  const color = root ? "border-[#474d55]" : "border-[#2b323a]";
  return (
    <span className="flex w-3 shrink-0 flex-col pl-1.5">
      <span className={`h-[13px] ${color} ${upper ? "border-l" : ""} ${branch ? "border-b" : ""}`} />
      <span className={`flex-1 ${color} ${lower ? "border-l" : ""}`} />
    </span>
  );
}

function Tree({ name, rows, openEnded = [] }: { name: string; rows: Row[]; openEnded?: number[] }) {
  const [folded, setFolded] = useState<string[]>([]);

  const visible: Row[] = [];
  let hiddenBelow = Infinity;
  for (const row of rows) {
    if (row[0] > hiddenBelow) continue;
    hiddenBelow = folded.includes(row[4]) ? row[0] : Infinity;
    visible.push(row);
  }

  const continues = (index: number, level: number) => {
    for (let j = index + 1; j < visible.length; j++) {
      if (visible[j][0] <= level) return false;
      if (visible[j][0] === level + 1) return true;
    }
    return openEnded.includes(level);
  };

  const toggle = (label: string) =>
    setFolded((now) => (now.includes(label) ? now.filter((n) => n !== label) : [...now, label]));

  return (
    <ul role="tree" aria-label={name} className="min-w-0">
      {visible.map(([depth, fold, icon, tint, label, flag], i) => {
        const open = fold === "open" && !folded.includes(label);
        const selected = depth === 0;
        const textColor = selected ? "text-[#d5dde4]" : flag === "dim" ? "text-[#585d64]" : "text-[#adb0b5]";
        return (
          <li
            key={label}
            role="treeitem"
            aria-level={depth + 1}
            aria-selected={selected}
            className="flex h-[25px] [&:nth-child(5n+3)]:h-[26px]"
          >
            {Array.from({ length: depth }, (_, k) => {
              const more = continues(i, k);
              const own = k === depth - 1;
              return <Guide key={k} root={k === 0} upper={more || own} lower={more} branch={own} />;
            })}
            {fold === "leaf" ? (
              <span className={`h-[13px] w-3 shrink-0 border-b ${depth === 1 ? "border-[#474d55]" : "border-[#2b323a]"}`} />
            ) : (
              <button
                type="button"
                aria-label={`${open ? "Collapse" : "Expand"} ${label}`}
                onClick={() => toggle(label)}
                className="flex w-3 shrink-0 items-center justify-center text-[#7c8187]"
              >
                <svg viewBox="0 0 10 10" className="size-[10px]" fill="none" stroke="currentColor" strokeWidth="1.800">
                  <path d={open ? "M1.500 3l3.500 3.500L8.500 3" : "M3.500 1.500L7 5 3.500 8.500"} />
                </svg>
              </button>
            )}
            <span className={`flex min-w-0 flex-1 items-center ${selected ? "rounded-xs bg-[#344b63]" : ""}`}>
              <svg viewBox="0 0 16 16" className={`size-4 shrink-0 ${TINTS[tint]}`} aria-hidden="true">
                {ICONS[icon]}
              </svg>
              <span className={`flex-1 pl-[5px] font-medium whitespace-nowrap ${textColor}`}>{label}</span>
              {flag && flag !== "dim" && <StatusIcon flag={flag} />}
            </span>
          </li>
        );
      })}
    </ul>
  );
}

export default function App() {
  return (
    <main className="relative flex h-screen flex-col overflow-hidden bg-[#2c313a] font-['Noto_Sans','Noto_Sans_CJK_SC',sans-serif] text-[13px] leading-5">
      <h1 className="h-[25px] shrink-0 border-t border-[#5c5d5f] bg-linear-to-b from-[#2b2f36] to-[#303640] pl-[7px] text-[14px] leading-[14px] font-medium text-[#a9acb0]">
        Matches:
      </h1>
      <section className="ml-[3px] min-h-0 flex-1 overflow-hidden border-t-3 border-l-3 border-[#5f95bf] bg-[#20262e] pt-px pl-px">
        <div className="grid grid-cols-[414fr_407fr_407fr_232fr]">
          <div className="min-w-0 pr-[3px]">
            <Tree name="Nodes" rows={NODES} />
          </div>
          <div className="min-w-0 pr-[5px]">
            <Tree name="2D nodes" rows={NODES_2D} openEnded={[0, 1, 2]} />
          </div>
          <div className="min-w-0 pr-[5px]">
            <Tree name="Control nodes" rows={CONTROLS} openEnded={[0, 2]} />
          </div>
          <div className="min-w-0">
            <Tree name="3D nodes" rows={NODES_3D} openEnded={[1, 2, 3]} />
          </div>
        </div>
      </section>

      <div className="pointer-events-none absolute inset-x-0 bottom-0 h-[350px] bg-linear-to-t from-black/30 to-transparent" />

      <svg viewBox="0 0 14 18" className="pointer-events-none absolute top-[115px] left-[500px] h-[18px] w-[14px]" aria-hidden="true">
        <path
          d="M3.500 1.500q1.500-1 2 .8L6.500 6q3-.8 5.500.8 1.200.7 1 2.700l-.5 4-1 3.500H6L5 15 1 10.500q-.5-1.500 1.200-1.500L4.500 10 3 3z"
          fill="#eceef0"
          stroke="#3a3f46"
          strokeWidth=".7"
        />
      </svg>

      <div className="pointer-events-none absolute bottom-[-21px] left-3/4 size-6 -translate-x-1/2 rounded-full bg-[#ff0033]" />

      <div className="pointer-events-none absolute right-0 bottom-[33px] w-[50px] overflow-hidden whitespace-nowrap text-[#909294]">
        <p className="text-[20px] leading-[26px]">激活 Windows</p>
        <p className="text-[15px] leading-5">转到“设置”以激活 Windows。</p>
      </div>
    </main>
  );
}
